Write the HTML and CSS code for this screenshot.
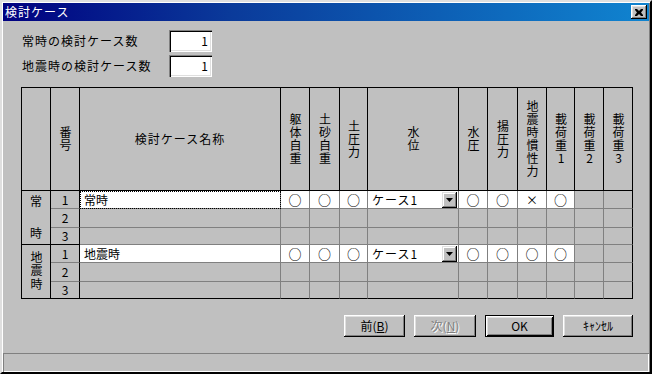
FILE: index.html
```html
<!DOCTYPE html>
<html lang="ja">
<head>
<meta charset="utf-8">
<title>検討ケース</title>
<link rel="stylesheet" href="styles.css">
</head>
<body>
<div class="window">
  <div class="titlebar">
    <span class="title">検討ケース</span>
    <button class="close" type="button" aria-label="閉じる">
      <svg width="8" height="7" viewBox="0 0 8 7"><path d="M0 0h2l2 2 2-2h2v1l-2 2.5 2 2.5v1h-2l-2-2-2 2h-2v-1l2-2.5-2-2.5z" fill="#000"/></svg>
    </button>
  </div>
  <div class="content">
    <div class="counts">
      <div class="count-row"><span class="count-label">常時の検討ケース数</span><span class="num-input">1</span></div>
      <div class="count-row"><span class="count-label">地震時の検討ケース数</span><span class="num-input">1</span></div>
    </div>

    <div class="grid">
      <div class="cell hd grp-col"></div>
      <div class="cell hd"><span class="vt">番号</span></div>
      <div class="cell hd"><span class="hz">検討ケース名称</span></div>
      <div class="cell hd"><span class="vt">躯体自重</span></div>
      <div class="cell hd"><span class="vt">土砂自重</span></div>
      <div class="cell hd"><span class="vt">土圧力</span></div>
      <div class="cell hd"><span class="vt">水位</span></div>
      <div class="cell hd"><span class="vt">水圧</span></div>
      <div class="cell hd"><span class="vt">揚圧力</span></div>
      <div class="cell hd"><span class="vt">地震時慣性力</span></div>
      <div class="cell hd"><span class="vt">載荷重1</span></div>
      <div class="cell hd"><span class="vt">載荷重2</span></div>
      <div class="cell hd lc"><span class="vt">載荷重3</span></div>

      <!-- 常時 -->
      <div class="cell grp grp-spread"><span>常</span><span>時</span></div>
      <div class="cell no">1</div>
      <div class="cell w name focus">常時</div>
      <div class="cell w mark">○</div>
      <div class="cell w mark">○</div>
      <div class="cell w mark">○</div>
      <div class="cell w combo"><span>ケース1</span><span class="dd"><svg width="7" height="4" viewBox="0 0 7 4"><path d="M0 0h7l-3.5 4z" fill="#000"/></svg></span></div>
      <div class="cell w mark">○</div>
      <div class="cell w mark">○</div>
      <div class="cell w mark cross">×</div>
      <div class="cell w mark">○</div>
      <div class="cell"></div>
      <div class="cell lc"></div>

      <div class="cell no">2</div>
      <div class="cell"></div><div class="cell"></div><div class="cell"></div><div class="cell"></div><div class="cell"></div><div class="cell"></div><div class="cell"></div><div class="cell"></div><div class="cell"></div><div class="cell"></div><div class="cell lc"></div>

      <div class="cell no end">3</div>
      <div class="cell"></div><div class="cell"></div><div class="cell"></div><div class="cell"></div><div class="cell"></div><div class="cell"></div><div class="cell"></div><div class="cell"></div><div class="cell"></div><div class="cell"></div><div class="cell lc"></div>

      <!-- 地震時 -->
      <div class="cell grp lr"><span class="vt grp-vt">地震時</span></div>
      <div class="cell no">1</div>
      <div class="cell w name">地震時</div>
      <div class="cell w mark">○</div>
      <div class="cell w mark">○</div>
      <div class="cell w mark">○</div>
      <div class="cell w combo"><span>ケース1</span><span class="dd"><svg width="7" height="4" viewBox="0 0 7 4"><path d="M0 0h7l-3.5 4z" fill="#000"/></svg></span></div>
      <div class="cell w mark">○</div>
      <div class="cell w mark">○</div>
      <div class="cell w mark">○</div>
      <div class="cell w mark">○</div>
      <div class="cell"></div>
      <div class="cell lc"></div>

      <div class="cell no">2</div>
      <div class="cell"></div><div class="cell"></div><div class="cell"></div><div class="cell"></div><div class="cell"></div><div class="cell"></div><div class="cell"></div><div class="cell"></div><div class="cell"></div><div class="cell"></div><div class="cell lc"></div>

      <div class="cell no lr">3</div>
      <div class="cell lr"></div><div class="cell lr"></div><div class="cell lr"></div><div class="cell lr"></div><div class="cell lr"></div><div class="cell lr"></div><div class="cell lr"></div><div class="cell lr"></div><div class="cell lr"></div><div class="cell lr"></div><div class="cell lr lc"></div>
    </div>

    <div class="buttons">
      <button class="btn b-prev" type="button">前(<u>B</u>)</button>
      <button class="btn b-next" type="button" disabled>次(<u>N</u>)</button>
      <button class="btn b-ok default" type="button">OK</button>
      <button class="btn b-cancel" type="button">ｷｬﾝｾﾙ</button>
    </div>
  </div>
  <div class="statusbar"></div>
</div>
</body>
</html>
```

FILE: styles.css
```css
* { box-sizing: border-box; }

html, body {
  margin: 0;
  padding: 0;
}

body {
  width: 652px;
  height: 374px;
  overflow: hidden;
  background: #c0c0c0;
  color: #000;
  font-family: "Noto Sans CJK JP", "Noto Sans", sans-serif;
  font-size: 12px;
  line-height: 14px;
}

.window {
  width: 652px;
  height: 374px;
  display: flex;
  flex-direction: column;
  background: #c0c0c0;
  border: 2px solid;
  border-color: #dfdfdf #000 #000 #dfdfdf;
  box-shadow: inset 1px 1px #fff, inset -1px -1px #808080;
  padding: 1px 1px 0 1px;
}

/* title bar */
.titlebar {
  flex: none;
  height: 18px;
  display: flex;
  align-items: center;
  justify-content: space-between;
  padding: 0 2px 0 2px;
  background: linear-gradient(90deg, #000080 0%, #0a3a9a 35%, #1084d0 100%);
}

.title {
  color: #fff;
  font-size: 12px;
  letter-spacing: 1px;
  line-height: 18px;
}

.close {
  width: 16px;
  height: 14px;
  padding: 0;
  border: 0;
  background: #c0c0c0;
  display: flex;
  align-items: center;
  justify-content: center;
  box-shadow: inset -1px -1px #000, inset 1px 1px #fff, inset -2px -2px #808080, inset 2px 2px #dfdfdf;
}

/* content */
.content {
  flex: 1;
  padding: 9px 15px 0 18px;
}

.count-row {
  display: flex;
  align-items: center;
  height: 22px;
}

.count-row + .count-row {
  margin-top: 3px;
}

.count-label {
  width: 148px;
  padding-left: 1px;
  letter-spacing: 1px;
}

.num-input {
  width: 43px;
  height: 22px;
  background: #fff;
  text-align: right;
  padding-right: 4px;
  line-height: 22px;
  box-shadow: inset 1px 1px #808080, inset 2px 2px #000, inset -1px -1px #fff, inset -2px -2px #dfdfdf;
}

/* grid */
.grid {
  margin-top: 10px;
  width: 612px;
  display: grid;
  grid-template-columns: 29px 29px 201px 29px 30px 28px 91px 29px 30px 29px 28px 29px 29px;
  grid-template-rows: 103px 18px 19px 17px 18px 19px 17px;
  border-left: 1px solid #000;
  border-top: 1px solid #000;
}

.cell {
  border-right: 1px solid #808080;
  border-bottom: 1px solid #808080;
  display: flex;
  align-items: center;
  justify-content: center;
  overflow: hidden;
  background: #c0c0c0;
  line-height: 14px;
}

.hd {
  border-right-color: #000;
  border-bottom-color: #000;
}

.lc { border-right-color: #000; }
.lr { border-bottom-color: #000; }

.vt {
  writing-mode: vertical-rl;
  text-orientation: upright;
  letter-spacing: 1px;
  line-height: 14px;
}

.hz {
  letter-spacing: 1px;
}

.grp {
  grid-row: span 3;
  border-right-color: #000;
  border-bottom-color: #000;
}

.grp-spread {
  flex-direction: column;
  justify-content: space-between;
  padding: 3px 0 4px;
}

.grp-vt {
  letter-spacing: 1.5px;
}

.no {
  border-right-color: #000;
}

.no.end { border-bottom-color: #000; }

.w { background: #fff; }

.name {
  justify-content: flex-start;
  padding-left: 4px;
}

.focus {
  outline: 1px dotted #000;
  outline-offset: -1px;
}

.mark {
  font-size: 13px;
  font-weight: 500;
}

.mark.cross {
  font-size: 12px;
  font-weight: 400;
}

.combo {
  justify-content: space-between;
  padding: 0 1px 0 4px;
  letter-spacing: 1px;
}

.dd {
  width: 15px;
  height: 16px;
  background: #c0c0c0;
  display: flex;
  align-items: center;
  justify-content: center;
  box-shadow: inset -1px -1px #000, inset 1px 1px #dfdfdf, inset -2px -2px #808080, inset 2px 2px #fff;
}

/* buttons */
.buttons {
  display: flex;
  justify-content: flex-end;
  gap: 9px;
  margin-top: 16px;
  padding-right: 1px;
}

.btn {
  height: 22px;
  padding: 0;
  border: 0;
  background: #c0c0c0;
  font-family: "Noto Sans CJK JP", "Noto Sans", sans-serif;
  font-size: 12px;
  line-height: 14px;
  color: #000;
  box-shadow: inset -1px -1px #000, inset 1px 1px #fff, inset -2px -2px #808080, inset 2px 2px #dfdfdf;
}

.btn u { text-underline-offset: 1px; }

.b-prev { width: 61px; }
.b-next { width: 62px; }
.b-ok { width: 69px; }
.b-cancel { width: 70px; }

.btn:disabled {
  color: #808080;
  text-shadow: 1px 1px #fff;
}

.btn.default {
  box-shadow: inset 1px 1px #000, inset -1px -1px #000, inset 2px 2px #fff, inset -2px -2px #000, inset 3px 3px #dfdfdf, inset -3px -3px #808080;
}

/* status bar */
.statusbar {
  flex: none;
  height: 19px;
  box-shadow: inset 1px 1px #808080, inset -1px -1px #fff;
}
```
